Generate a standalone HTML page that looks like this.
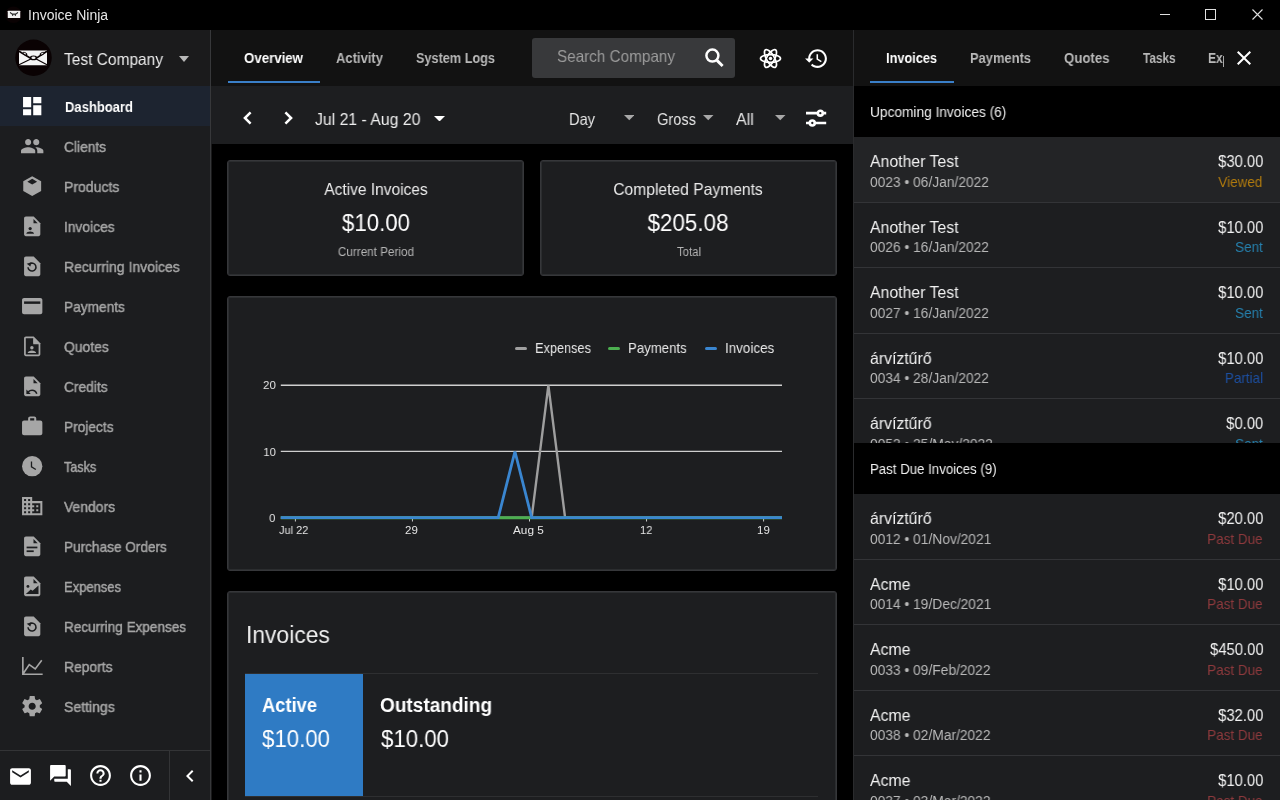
<!DOCTYPE html>
<html><head><meta charset="utf-8">
<style>
*{margin:0;padding:0;box-sizing:border-box}
html,body{width:1280px;height:800px;overflow:hidden;background:#000;font-family:"Liberation Sans",sans-serif;color:#fff}
.a{position:absolute;display:block}
.t{position:absolute;white-space:nowrap;line-height:1;will-change:transform}
.sb{-webkit-text-stroke:0.35px currentColor}
</style></head><body>
<div class="a" style="left:0px;top:0px;width:1280px;height:30px;background:#000;"></div>
<div class="a" style="left:0px;top:30px;width:210px;height:770px;background:#1c1d1f;"></div>
<div class="a" style="left:0px;top:30px;width:210px;height:56px;background:#1b1b1c;"></div>
<div class="a" style="left:210px;top:30px;width:1px;height:770px;background:#37383a;"></div>
<div class="a" style="left:211px;top:30px;width:1px;height:770px;background:rgba(55,56,58,0.45);"></div>
<div class="a" style="left:211px;top:30px;width:642px;height:56px;background:#121212;"></div>
<div class="a" style="left:211px;top:86px;width:642px;height:58px;background:#1d1e20;"></div>
<div class="a" style="left:853px;top:30px;width:1px;height:770px;background:#2a2b2d;"></div>
<div class="a" style="left:854px;top:30px;width:426px;height:56px;background:#121212;"></div>
<div class="t" style="left:28.00px;top:8.00px;font-size:14px;color:#e6e6e6;transform:scaleX(0.9981);transform-origin:left;">Invoice Ninja</div>
<svg class="a" style="left:4px;top:5px;" width="20" height="20" viewBox="0 0 20 20"><circle cx="9.5" cy="9.8" r="8.3" fill="#0a0203"/><rect x="3.75" y="5.75" width="12.5" height="7.25" rx="0.6" fill="#f0f0f0"/><path d="M6.2 7.3 Q7 9.1 8.6 9.1 H11.4 Q13 9.1 13.8 7.3" stroke="#2a2a2a" stroke-width="1.1" fill="none"/><rect x="8.1" y="9" width="1.1" height="1.9" fill="#2a2a2a"/><rect x="10.8" y="9" width="1.1" height="1.9" fill="#2a2a2a"/></svg>
<div class="a" style="left:1160px;top:14px;width:10px;height:1px;background:#e0e0e0;"></div>
<div class="a" style="left:1205px;top:9px;width:11px;height:11px;background:transparent;border:1px solid #e0e0e0"></div>
<svg class="a" style="left:1252px;top:9px;" width="11" height="11" viewBox="0 0 11 11"><path d="M0.5 0.5L10.5 10.5M10.5 0.5L0.5 10.5" stroke="#e0e0e0" stroke-width="1.1"/></svg>
<svg class="a" style="left:14px;top:39px;" width="38" height="38" viewBox="0 0 38 38"><circle cx="19.5" cy="18.75" r="18.25" fill="#0a0203"/><rect x="5" y="11.5" width="28" height="14.75" fill="#f4f4f4"/><path d="M5 12.2 L17 19.4 M33 12.2 L22 19.4" stroke="#0a0203" stroke-width="1.7" fill="none"/><path d="M5 25.8 L16.8 20 M33 25.8 L22.2 20" stroke="#0a0203" stroke-width="1.2" fill="none"/><ellipse cx="19.5" cy="18.9" rx="3.6" ry="2.3" fill="#0a0203"/><ellipse cx="19.5" cy="18.7" rx="2.1" ry="1.2" fill="#f4f4f4"/><ellipse cx="11" cy="14.8" rx="2.6" ry="1.5" transform="rotate(30 11 14.8)" fill="#0a0203"/><ellipse cx="10.8" cy="14.5" rx="1.5" ry="0.6" transform="rotate(30 10.8 14.5)" fill="#f4f4f4"/><ellipse cx="28" cy="14.8" rx="2.6" ry="1.5" transform="rotate(-30 28 14.8)" fill="#0a0203"/><ellipse cx="28.2" cy="14.5" rx="1.5" ry="0.6" transform="rotate(-30 28.2 14.5)" fill="#f4f4f4"/></svg>
<div class="t" style="left:64.00px;top:50.75px;font-size:16.5px;color:#ececec;transform:scaleX(0.9388);transform-origin:left;">Test Company</div>
<svg class="a" style="left:179px;top:56px;" width="10" height="6" viewBox="0 0 10 6"><path d="M0 0h10L5 6z" fill="#b8b8b8"/></svg>
<div class="a" style="left:0px;top:86px;width:210px;height:40px;background:#1d2430;"></div>
<div class="t" style="left:64.50px;top:100.00px;font-size:14px;color:#ffffff;font-weight:bold;transform:scaleX(0.9302);transform-origin:left;">Dashboard</div>
<div class="t" style="left:64.30px;top:139.75px;font-size:14.5px;color:#a6a6a6;transform:scaleX(0.9492);transform-origin:left;-webkit-text-stroke:0.45px #a6a6a6">Clients</div>
<div class="t" style="left:64.30px;top:179.75px;font-size:14.5px;color:#a6a6a6;transform:scaleX(0.9668);transform-origin:left;-webkit-text-stroke:0.45px #a6a6a6">Products</div>
<div class="t" style="left:64.30px;top:219.75px;font-size:14.5px;color:#a6a6a6;transform:scaleX(0.9502);transform-origin:left;-webkit-text-stroke:0.45px #a6a6a6">Invoices</div>
<div class="t" style="left:64.30px;top:259.75px;font-size:14.5px;color:#a6a6a6;transform:scaleX(0.9642);transform-origin:left;-webkit-text-stroke:0.45px #a6a6a6">Recurring Invoices</div>
<div class="t" style="left:64.30px;top:299.75px;font-size:14.5px;color:#a6a6a6;transform:scaleX(0.9434);transform-origin:left;-webkit-text-stroke:0.45px #a6a6a6">Payments</div>
<div class="t" style="left:64.30px;top:339.75px;font-size:14.5px;color:#a6a6a6;transform:scaleX(0.9583);transform-origin:left;-webkit-text-stroke:0.45px #a6a6a6">Quotes</div>
<div class="t" style="left:64.30px;top:379.75px;font-size:14.5px;color:#a6a6a6;transform:scaleX(0.9478);transform-origin:left;-webkit-text-stroke:0.45px #a6a6a6">Credits</div>
<div class="t" style="left:64.30px;top:419.75px;font-size:14.5px;color:#a6a6a6;transform:scaleX(0.9456);transform-origin:left;-webkit-text-stroke:0.45px #a6a6a6">Projects</div>
<div class="t" style="left:64.30px;top:459.75px;font-size:14.5px;color:#a6a6a6;transform:scaleX(0.8718);transform-origin:left;-webkit-text-stroke:0.45px #a6a6a6">Tasks</div>
<div class="t" style="left:64.30px;top:499.75px;font-size:14.5px;color:#a6a6a6;transform:scaleX(0.9596);transform-origin:left;-webkit-text-stroke:0.45px #a6a6a6">Vendors</div>
<div class="t" style="left:64.30px;top:539.75px;font-size:14.5px;color:#a6a6a6;transform:scaleX(0.9380);transform-origin:left;-webkit-text-stroke:0.45px #a6a6a6">Purchase Orders</div>
<div class="t" style="left:64.30px;top:579.75px;font-size:14.5px;color:#a6a6a6;transform:scaleX(0.8956);transform-origin:left;-webkit-text-stroke:0.45px #a6a6a6">Expenses</div>
<div class="t" style="left:64.30px;top:619.75px;font-size:14.5px;color:#a6a6a6;transform:scaleX(0.9349);transform-origin:left;-webkit-text-stroke:0.45px #a6a6a6">Recurring Expenses</div>
<div class="t" style="left:64.30px;top:659.75px;font-size:14.5px;color:#a6a6a6;transform:scaleX(0.9567);transform-origin:left;-webkit-text-stroke:0.45px #a6a6a6">Reports</div>
<div class="t" style="left:64.30px;top:699.75px;font-size:14.5px;color:#a6a6a6;transform:scaleX(0.9695);transform-origin:left;-webkit-text-stroke:0.45px #a6a6a6">Settings</div>
<svg class="a" style="left:19.5px;top:93.6px;" width="24.4" height="24.4" viewBox="0 0 24 24"><path fill="#fff" d="M3 13h8V3H3v10zm0 8h8v-6H3v6zm10 0h8V11h-8v10zm0-18v6h8V3h-8z"/></svg>
<svg class="a" style="left:19.5px;top:133.60000000000002px;" width="24.4" height="24.4" viewBox="0 0 24 24"><path fill="#a6a6a6" d="M16 11c1.66 0 2.99-1.34 2.99-3S17.66 5 16 5c-1.66 0-3 1.34-3 3s1.34 3 3 3zm-8 0c1.66 0 2.99-1.34 2.99-3S9.66 5 8 5C6.34 5 5 6.34 5 8s1.34 3 3 3zm0 2c-2.33 0-7 1.17-7 3.5V19h14v-2.5c0-2.33-4.67-3.5-7-3.5zm8 0c-.29 0-.62.02-.97.05 1.16.84 1.97 1.97 1.97 3.45V19h6v-2.5c0-2.33-4.67-3.5-7-3.5z"/></svg>
<svg class="a" style="left:19.5px;top:173.60000000000002px;" width="24.4" height="24.4" viewBox="0 0 24 24"><path fill="#a6a6a6" d="M12 2.3 L20.8 7.2 V16.8 L12 21.7 L3.2 16.8 V7.2 Z"/><path fill="#1c1d1f" d="M12 4.7 L16.8 7.6 L12 10.4 L7.2 7.6 Z"/></svg>
<svg class="a" style="left:19.5px;top:213.60000000000002px;" width="24.4" height="24.4" viewBox="0 0 24 24"><path fill="#a6a6a6" d="M6 2.5h7.5L20 9v11c0 1-.8 1.8-1.8 1.8H5.8C4.8 21.8 4 21 4 20V4.3C4 3.3 4.8 2.5 5.8 2.5z"/><path fill="#1c1d1f" d="M13.3 5 L17.4 9.2 H13.3 Z"/><circle cx="10" cy="14.3" r="1.6" fill="#1c1d1f"/><path fill="#1c1d1f" d="M6.2 19.5c0-1.6 2.2-2.4 3.8-2.4s3.8.8 3.8 2.4z"/></svg>
<svg class="a" style="left:19.5px;top:253.60000000000002px;" width="24.4" height="24.4" viewBox="0 0 24 24"><path fill="#a6a6a6" d="M6 2.5h7.5L20 9v11c0 1-.8 1.8-1.8 1.8H5.8C4.8 21.8 4 21 4 20V4.3C4 3.3 4.8 2.5 5.8 2.5z"/><path fill="none" stroke="#1c1d1f" stroke-width="1.5" d="M9.9 9.5 A3.9 3.9 0 1 1 7.9 13"/><path fill="#1c1d1f" d="M6.6 9.6 L11.2 8.2 L10.2 12.2 Z"/></svg>
<svg class="a" style="left:19.5px;top:293.6px;" width="24.4" height="24.4" viewBox="0 0 24 24"><path fill="#a6a6a6" d="M20 4H4c-1.11 0-2 .89-2 2v12c0 1.11.89 2 2 2h16c1.11 0 2-.89 2-2V6c0-1.11-.89-2-2-2z"/><rect x="4" y="7.3" width="16" height="2.4" fill="#1c1d1f"/></svg>
<svg class="a" style="left:19.5px;top:333.6px;" width="24.4" height="24.4" viewBox="0 0 24 24"><path fill="#a6a6a6" d="M6 2.5h7.5L20 9v11c0 1-.8 1.8-1.8 1.8H5.8C4.8 21.8 4 21 4 20V4.3C4 3.3 4.8 2.5 5.8 2.5z"/><path fill="#1c1d1f" d="M5.7 4.3h7.3V10h5.3v10.1H5.7z"/><path fill="#a6a6a6" d="M13.3 5 L17.4 9.2 H13.3 Z"/><circle cx="11.7" cy="13.6" r="1.7" fill="#a6a6a6"/><path fill="#a6a6a6" d="M7.5 18.8c0-1.7 2.5-2.6 4.2-2.6s4.2.9 4.2 2.6z"/></svg>
<svg class="a" style="left:19.5px;top:373.6px;" width="24.4" height="24.4" viewBox="0 0 24 24"><path fill="#a6a6a6" d="M6 2.5h7.5L20 9v11c0 1-.8 1.8-1.8 1.8H5.8C4.8 21.8 4 21 4 20V4.3C4 3.3 4.8 2.5 5.8 2.5z"/><path fill="#1c1d1f" d="M13.3 5 L17.4 9.2 H13.3 Z"/><path fill="none" stroke="#1c1d1f" stroke-width="1.5" d="M16.5 19.5c-.8-2.3-2.6-3.4-4.6-3.4-1.5 0-2.8.6-3.8 1.5"/><path fill="#1c1d1f" d="M6.3 15.2 V19.6 H10.6 Z"/></svg>
<svg class="a" style="left:19.5px;top:413.6px;" width="24.4" height="24.4" viewBox="0 0 24 24"><path fill="#a6a6a6" d="M20 6.5h-4V4.5c0-1.11-.89-2-2-2h-4c-1.11 0-2 .89-2 2v2H4c-1.11 0-1.99.89-1.99 2L2 19c0 1.11.89 2 2 2h16c1.11 0 2-.89 2-2V8.5c0-1.11-.89-2-2-2zm-6 0h-4V4.2h4v2.3z"/></svg>
<svg class="a" style="left:19.5px;top:453.6px;" width="24.4" height="24.4" viewBox="0 0 24 24"><circle cx="12" cy="12" r="10" fill="#a6a6a6"/><path fill="none" stroke="#1c1d1f" stroke-width="1.3" d="M11.3 7.3V12.6L15.6 15.3"/></svg>
<svg class="a" style="left:19.5px;top:493.6px;" width="24.4" height="24.4" viewBox="0 0 24 24"><path fill="#a6a6a6" d="M12 7V3H2v18h20V7H12zM6 19H4v-2h2v2zm0-4H4v-2h2v2zm0-4H4V9h2v2zm0-4H4V5h2v2zm4 12H8v-2h2v2zm0-4H8v-2h2v2zm0-4H8V9h2v2zm0-4H8V5h2v2zm10 12h-8v-2h2v-2h-2v-2h2v-2h-2V9h8v10zm-2-8h-2v2h2v-2zm0 4h-2v2h2v-2z"/></svg>
<svg class="a" style="left:19.5px;top:533.5999999999999px;" width="24.4" height="24.4" viewBox="0 0 24 24"><path fill="#a6a6a6" d="M6 2.5h7.5L20 9v11c0 1-.8 1.8-1.8 1.8H5.8C4.8 21.8 4 21 4 20V4.3C4 3.3 4.8 2.5 5.8 2.5z"/><path fill="#1c1d1f" d="M13.3 5 L17.4 9.2 H13.3 Z"/><rect x="6.5" y="12.4" width="10.6" height="1.7" fill="#1c1d1f"/><rect x="6.5" y="16.1" width="7" height="1.7" fill="#1c1d1f"/></svg>
<svg class="a" style="left:19.5px;top:573.5999999999999px;" width="24.4" height="24.4" viewBox="0 0 24 24"><path fill="#a6a6a6" d="M6 2.5h7.5L20 9v11c0 1-.8 1.8-1.8 1.8H5.8C4.8 21.8 4 21 4 20V4.3C4 3.3 4.8 2.5 5.8 2.5z"/><path fill="#1c1d1f" d="M13.3 5 L17.4 9.2 H13.3 Z"/><circle cx="7.8" cy="12.2" r="1.4" fill="#1c1d1f"/><path fill="#1c1d1f" d="M5.8 19.8 L10.6 15.2 L12.4 16.6 L18.2 11.2 V19.8 Z"/></svg>
<svg class="a" style="left:19.5px;top:613.5999999999999px;" width="24.4" height="24.4" viewBox="0 0 24 24"><path fill="#a6a6a6" d="M6 2.5h7.5L20 9v11c0 1-.8 1.8-1.8 1.8H5.8C4.8 21.8 4 21 4 20V4.3C4 3.3 4.8 2.5 5.8 2.5z"/><path fill="none" stroke="#1c1d1f" stroke-width="1.5" d="M9.9 9.5 A3.9 3.9 0 1 1 7.9 13"/><path fill="#1c1d1f" d="M6.6 9.6 L11.2 8.2 L10.2 12.2 Z"/></svg>
<svg class="a" style="left:19.5px;top:653.5999999999999px;" width="24.4" height="24.4" viewBox="0 0 24 24"><path fill="none" stroke="#a6a6a6" stroke-width="1.6" d="M2.8 3v16.9h19.5M3.4 19l5.7-8.5 5.9 4.2 6.4-8.5"/></svg>
<svg class="a" style="left:19.5px;top:693.5999999999999px;" width="24.4" height="24.4" viewBox="0 0 24 24"><path fill="#a6a6a6" d="M19.43 12.98c.04-.32.07-.64.07-.98s-.03-.66-.07-.98l2.11-1.65c.19-.15.24-.42.12-.64l-2-3.46c-.12-.22-.39-.3-.61-.22l-2.49 1c-.52-.4-1.08-.73-1.69-.98l-.38-2.65C14.46 2.18 14.25 2 14 2h-4c-.25 0-.46.18-.49.42l-.38 2.65c-.61.25-1.17.59-1.69.98l-2.49-1c-.23-.09-.49 0-.61.22l-2 3.46c-.13.22-.07.49.12.64l2.11 1.65c-.04.32-.07.65-.07.98s.03.66.07.98l-2.11 1.65c-.19.15-.24.42-.12.64l2 3.46c.12.22.39.3.61.22l2.49-1c.52.4 1.08.73 1.69.98l.38 2.65c.03.24.24.42.49.42h4c.25 0 .46-.18.49-.42l.38-2.65c.61-.25 1.17-.59 1.69-.98l2.49 1c.23.09.49 0 .61-.22l2-3.46c.12-.22.07-.49-.12-.64l-2.11-1.65zM12 15.5c-1.93 0-3.5-1.57-3.5-3.5s1.57-3.5 3.5-3.5 3.5 1.57 3.5 3.5-1.57 3.5-3.5 3.5z"/></svg>
<div class="a" style="left:0px;top:750px;width:210px;height:1px;background:#333436;"></div>
<div class="a" style="left:169px;top:751px;width:1px;height:49px;background:#333436;"></div>
<svg class="a" style="left:7.75px;top:763.5px;" width="25" height="25" viewBox="0 0 24 24"><path fill="#fff" d="M20 4H4c-1.1 0-1.99.9-1.99 2L2 18c0 1.1.9 2 2 2h16c1.1 0 2-.9 2-2V6c0-1.1-.9-2-2-2zm0 4l-8 5-8-5V6l8 5 8-5v2z"/></svg>
<svg class="a" style="left:47.75px;top:763.1px;" width="25" height="25" viewBox="0 0 24 24"><path fill="#fff" d="M21 6h-2v9H6v2c0 .55.45 1 1 1h11l4 4V7c0-.55-.45-1-1-1zm-4 6V3c0-.55-.45-1-1-1H3c-.55 0-1 .45-1 1v14l4-4h10c.55 0 1-.45 1-1z"/></svg>
<svg class="a" style="left:87.5px;top:763.0px;" width="25" height="25" viewBox="0 0 24 24"><path fill="#fff" d="M11 18h2v-2h-2v2zm1-16C6.48 2 2 6.48 2 12s4.48 10 10 10 10-4.48 10-10S17.52 2 12 2zm0 18c-4.41 0-8-3.59-8-8s3.59-8 8-8 8 3.59 8 8-3.59 8-8 8zm0-14c-2.21 0-4 1.79-4 4h2c0-1.1.9-2 2-2s2 .9 2 2c0 2-3 1.75-3 5h2c0-2.25 3-2.5 3-5 0-2.21-1.79-4-4-4z"/></svg>
<svg class="a" style="left:127.6px;top:763.0px;" width="25" height="25" viewBox="0 0 24 24"><path fill="#fff" d="M11 7h2v2h-2zm0 4h2v6h-2zm1-9C6.48 2 2 6.48 2 12s4.48 10 10 10 10-4.48 10-10S17.52 2 12 2zm0 18c-4.41 0-8-3.59-8-8s3.59-8 8-8 8 3.59 8 8-3.59 8-8 8z"/></svg>
<svg class="a" style="left:178.0px;top:763.7px;" width="24" height="24" viewBox="0 0 24 24"><path fill="#fff" d="M15.41 7.41L14 6l-6 6 6 6 1.41-1.41L10.83 12z"/></svg>
<div class="t" style="left:244.20px;top:51.00px;font-size:14px;color:#ffffff;font-weight:bold;transform:scaleX(0.9470);transform-origin:left;">Overview</div>
<div class="t" style="left:336.00px;top:51.00px;font-size:14px;color:#b9b9b9;font-weight:bold;transform:scaleX(0.9298);transform-origin:left;">Activity</div>
<div class="t" style="left:416.00px;top:51.00px;font-size:14px;color:#b9b9b9;font-weight:bold;transform:scaleX(0.9065);transform-origin:left;">System Logs</div>
<div class="a" style="left:228px;top:80.6px;width:92px;height:2.2px;background:#3a7fc8;"></div>
<div class="a" style="left:532px;top:38px;width:203px;height:40px;background:#38393b;border-radius:3px"></div>
<div class="t" style="left:557.00px;top:47.75px;font-size:16.5px;color:#9c9c9c;transform:scaleX(0.9255);transform-origin:left;">Search Company</div>
<svg class="a" style="left:700px;top:42px;" width="30" height="30" viewBox="0 0 30 30"><g fill="none" stroke="#fff"><circle cx="12.4" cy="13.6" r="6" stroke-width="2.5"/><path d="M17 18.4L22.6 24" stroke-width="2.9"/></g></svg>
<svg class="a" style="left:759px;top:48px;" width="23" height="21" viewBox="0 0 23 21"><g transform="translate(11.5,10.5)" fill="none" stroke="#fff" stroke-width="1.7"><ellipse rx="10" ry="3.9"/><ellipse rx="10" ry="3.9" transform="rotate(60)"/><ellipse rx="10" ry="3.9" transform="rotate(120)"/><circle r="2.6" fill="#121212" stroke="none"/><circle r="1.75" fill="#fff" stroke="none"/></g></svg>
<svg class="a" style="left:803.5px;top:45.5px;" width="25" height="25" viewBox="0 0 24 24"><path fill="#fff" d="M13 3c-4.97 0-9 4.03-9 9H1l3.89 3.89.07.14L9 12H6c0-3.87 3.13-7 7-7s7 3.13 7 7-3.13 7-7 7c-1.93 0-3.68-.79-4.94-2.06l-1.42 1.42C8.27 19.99 10.51 21 13 21c4.97 0 9-4.03 9-9s-4.03-9-9-9zm-1 5v5l4.28 2.54.72-1.21-3.5-2.08V8H12z"/></svg>
<svg class="a" style="left:238px;top:108px;" width="20" height="20" viewBox="0 0 20 20"><path d="M12.6 4.3L6.9 10L12.6 15.7" fill="none" stroke="#fff" stroke-width="2.5"/></svg>
<svg class="a" style="left:278px;top:108px;" width="20" height="20" viewBox="0 0 20 20"><path d="M7.4 4.3L13.1 10L7.4 15.7" fill="none" stroke="#fff" stroke-width="2.5"/></svg>
<div class="t" style="left:315.40px;top:110.75px;font-size:16.5px;color:#eeeeee;transform:scaleX(0.9573);transform-origin:left;">Jul 21 - Aug 20</div>
<svg class="a" style="left:434px;top:115.7px;" width="11" height="5.5" viewBox="0 0 11 5.5"><path d="M0 0h11L5.5 5.5z" fill="#fff"/></svg>
<div class="t" style="left:569.00px;top:110.75px;font-size:16.5px;color:#e6e6e6;transform:scaleX(0.8859);transform-origin:left;">Day</div>
<svg class="a" style="left:623.5px;top:115.4px;" width="10.5" height="5.3" viewBox="0 0 10.5 5.3"><path d="M0 0h10.5L5.25 5.3z" fill="#a8a8a8"/></svg>
<div class="t" style="left:656.50px;top:110.75px;font-size:16.5px;color:#e6e6e6;transform:scaleX(0.8864);transform-origin:left;">Gross</div>
<svg class="a" style="left:703.3px;top:115.4px;" width="10.5" height="5.3" viewBox="0 0 10.5 5.3"><path d="M0 0h10.5L5.25 5.3z" fill="#a8a8a8"/></svg>
<div class="t" style="left:736.20px;top:110.75px;font-size:16.5px;color:#e6e6e6;transform:scaleX(0.9646);transform-origin:left;">All</div>
<svg class="a" style="left:775.4px;top:115.4px;" width="10.5" height="5.3" viewBox="0 0 10.5 5.3"><path d="M0 0h10.5L5.25 5.3z" fill="#a8a8a8"/></svg>
<svg class="a" style="left:804px;top:108px;" width="24" height="20" viewBox="0 0 24 20"><g fill="none" stroke="#fff" stroke-width="2.6"><path d="M2 5.15H13.4M19.4 5.15H22.2M2 15H5.4M11.4 15H22.2"/><circle cx="16.3" cy="5.15" r="2.45"/><circle cx="8.3" cy="15" r="2.45"/></g></svg>
<div class="a" style="left:227px;top:160px;width:297px;height:116px;background:#1d1e20;border:1px solid #36373a;box-shadow:inset 0 0 0 1px rgba(54,55,58,0.6);border-radius:3px"></div>
<div class="a" style="left:540px;top:160px;width:296.5px;height:116px;background:#1d1e20;border:1px solid #36373a;box-shadow:inset 0 0 0 1px rgba(54,55,58,0.6);border-radius:3px"></div>
<div class="t" style="left:175.50px;width:400px;text-align:center;top:180.75px;font-size:16.5px;color:#ececec;transform:scaleX(0.9405);transform-origin:center;">Active Invoices</div>
<div class="t" style="left:176.00px;width:400px;text-align:center;top:211.25px;font-size:24.5px;color:#ffffff;transform:scaleX(0.9073);transform-origin:center;">$10.00</div>
<div class="t" style="left:175.60px;width:400px;text-align:center;top:245.75px;font-size:12.5px;color:#b4b4b4;transform:scaleX(0.9348);transform-origin:center;">Current Period</div>
<div class="t" style="left:488.25px;width:400px;text-align:center;top:180.75px;font-size:16.5px;color:#ececec;transform:scaleX(0.9490);transform-origin:center;">Completed Payments</div>
<div class="t" style="left:488.25px;width:400px;text-align:center;top:211.25px;font-size:24.5px;color:#ffffff;transform:scaleX(0.9147);transform-origin:center;">$205.08</div>
<div class="t" style="left:488.60px;width:400px;text-align:center;top:245.75px;font-size:12.5px;color:#b4b4b4;transform:scaleX(0.9091);transform-origin:center;">Total</div>
<div class="a" style="left:227px;top:296.3px;width:609.5px;height:274.7px;background:#1d1e20;border:1px solid #36373a;box-shadow:inset 0 0 0 1px rgba(54,55,58,0.6);border-radius:3px"></div>
<div class="a" style="left:515px;top:346.6px;width:12px;height:3px;background:#a0a0a0;border-radius:1.5px"></div>
<div class="t" style="left:535.20px;top:340.75px;font-size:14.5px;color:#e8e8e8;transform:scaleX(0.8791);transform-origin:left;">Expenses</div>
<div class="a" style="left:608px;top:346.6px;width:12px;height:3px;background:#4caf50;border-radius:1.5px"></div>
<div class="t" style="left:628.40px;top:340.75px;font-size:14.5px;color:#e8e8e8;transform:scaleX(0.9092);transform-origin:left;">Payments</div>
<div class="a" style="left:704.5px;top:346.6px;width:12px;height:3px;background:#3a86d0;border-radius:1.5px"></div>
<div class="t" style="left:724.50px;top:340.75px;font-size:14.5px;color:#e8e8e8;transform:scaleX(0.9248);transform-origin:left;">Invoices</div>
<svg class="a" style="left:0;top:0" width="1280" height="800" viewBox="0 0 1280 800"><line x1="280.8" y1="385.3" x2="782" y2="385.3" stroke="#cfcfcf" stroke-width="1.4"/><line x1="280.8" y1="451.4" x2="782" y2="451.4" stroke="#cfcfcf" stroke-width="1.4"/><line x1="295.40" y1="518" x2="295.40" y2="521.5" stroke="#cfcfcf" stroke-width="1"/><line x1="412.45" y1="518" x2="412.45" y2="521.5" stroke="#cfcfcf" stroke-width="1"/><line x1="529.50" y1="518" x2="529.50" y2="521.5" stroke="#cfcfcf" stroke-width="1"/><line x1="646.55" y1="518" x2="646.55" y2="521.5" stroke="#cfcfcf" stroke-width="1"/><line x1="763.60" y1="518" x2="763.60" y2="521.5" stroke="#cfcfcf" stroke-width="1"/><polyline fill="none" stroke="#9e9e9e" stroke-width="2.4" stroke-linejoin="miter" points="280.8,517.7 531.65,517.7 548.37,385.30 565.09,517.7 782,517.7"/><polyline fill="none" stroke="#4caf50" stroke-width="3" points="280.8,517.7 782,517.7"/><polyline fill="none" stroke="#3a86d0" stroke-width="2.8" points="280.8,517.7 498.22,517.7 514.94,451.50 531.65,517.7 782,517.7"/></svg>
<div class="t" style="right:1004.40px;top:380.25px;font-size:11.5px;color:#e6e6e6;transform:scaleX(0.9922);transform-origin:right;">20</div>
<div class="t" style="right:1004.40px;top:447.25px;font-size:11.5px;color:#e6e6e6;transform:scaleX(0.9700);transform-origin:right;">10</div>
<div class="t" style="right:1004.40px;top:513.25px;font-size:11.5px;color:#e6e6e6;transform:scaleX(0.9700);transform-origin:right;">0</div>
<div class="t" style="left:279.10px;top:525.25px;font-size:11.5px;color:#e6e6e6;transform:scaleX(0.9544);transform-origin:left;">Jul 22</div>
<div class="t" style="left:405.00px;top:525.25px;font-size:11.5px;color:#e6e6e6;transform:scaleX(0.9700);transform-origin:left;">29</div>
<div class="t" style="left:513.00px;top:525.25px;font-size:11.5px;color:#e6e6e6;transform:scaleX(1.0233);transform-origin:left;">Aug 5</div>
<div class="t" style="left:639.70px;top:525.25px;font-size:11.5px;color:#e6e6e6;transform:scaleX(0.9609);transform-origin:left;">12</div>
<div class="t" style="left:757.00px;top:525.25px;font-size:11.5px;color:#e6e6e6;transform:scaleX(0.9700);transform-origin:left;">19</div>
<div class="a" style="left:227px;top:591.3px;width:609.5px;height:240px;background:#1d1e20;border:1px solid #36373a;box-shadow:inset 0 0 0 1px rgba(54,55,58,0.6);border-radius:3px"></div>
<div class="t" style="left:245.50px;top:624.25px;font-size:23.5px;color:#f0f0f0;transform:scaleX(0.9716);transform-origin:left;">Invoices</div>
<div class="a" style="left:245px;top:673px;width:573px;height:1px;background:#2e2f31;"></div>
<div class="a" style="left:245px;top:674px;width:118px;height:122px;background:#2f7bc4;"></div>
<div class="a" style="left:245px;top:796px;width:573px;height:1px;background:#2e2f31;"></div>
<div class="t" style="left:261.75px;top:696.25px;font-size:19.5px;color:#ffffff;font-weight:bold;transform:scaleX(0.9394);transform-origin:left;">Active</div>
<div class="t" style="left:262.25px;top:727.25px;font-size:24.5px;color:#ffffff;transform:scaleX(0.9073);transform-origin:left;">$10.00</div>
<div class="t" style="left:379.75px;top:696.25px;font-size:19.5px;color:#ffffff;font-weight:bold;transform:scaleX(0.9756);transform-origin:left;">Outstanding</div>
<div class="t" style="left:380.50px;top:727.25px;font-size:24.5px;color:#ffffff;transform:scaleX(0.9073);transform-origin:left;">$10.00</div>
<div class="t" style="left:886.40px;top:51.00px;font-size:14px;color:#ffffff;font-weight:bold;transform:scaleX(0.9099);transform-origin:left;">Invoices</div>
<div class="t" style="left:970.40px;top:51.00px;font-size:14px;color:#b9b9b9;font-weight:bold;transform:scaleX(0.9221);transform-origin:left;">Payments</div>
<div class="t" style="left:1064.10px;top:51.00px;font-size:14px;color:#b9b9b9;font-weight:bold;transform:scaleX(0.9430);transform-origin:left;">Quotes</div>
<div class="t" style="left:1142.70px;top:51.00px;font-size:14px;color:#b9b9b9;font-weight:bold;transform:scaleX(0.8461);transform-origin:left;">Tasks</div>
<div class="a" style="left:1208px;top:45px;width:15px;height:25px;overflow:hidden"><div class="t" style="left:0;top:6.1px;font-size:14px;font-weight:bold;color:#b9b9b9;transform:scaleX(0.86);transform-origin:left">Ex</div></div>
<div class="a" style="left:1222.6px;top:55.5px;width:1.2px;height:11px;background:#a8a8a8;"></div>
<div class="a" style="left:870px;top:80.6px;width:84px;height:2.2px;background:#3a7fc8;"></div>
<svg class="a" style="left:1232.0px;top:46.0px;" width="24" height="24" viewBox="0 0 24 24"><path fill="#fff" d="M19 6.41L17.59 5 12 10.59 6.41 5 5 6.41 10.59 12 5 17.59 6.41 19 12 13.41 17.59 19 19 17.59 13.41 12z"/></svg>
<div class="a" style="left:854px;top:86px;width:426px;height:51px;background:#000;"></div>
<div class="t" style="left:870.10px;top:105.00px;font-size:14px;color:#f0f0f0;transform:scaleX(0.9792);transform-origin:left;">Upcoming Invoices (6)</div>
<div class="a" style="left:854px;top:137.0px;width:426px;height:64.5px;background:#232426;"></div>
<div class="a" style="left:854px;top:201.5px;width:426px;height:1.2px;background:#333437;"></div>
<div class="t" style="left:870.40px;top:152.75px;font-size:16.5px;color:#f2f2f2;transform:scaleX(0.9594);transform-origin:left;">Another Test</div>
<div class="t" style="left:870.40px;top:175.00px;font-size:14px;color:#b8b8b8;transform:scaleX(0.9843);transform-origin:left;">0023 • 06/Jan/2022</div>
<div class="t" style="right:16.80px;top:152.75px;font-size:16.5px;color:#f2f2f2;transform:scaleX(0.8979);transform-origin:right;">$30.00</div>
<div class="t" style="right:17.40px;top:174.75px;font-size:14.5px;color:#b27c0e;transform:scaleX(0.9302);transform-origin:right;">Viewed</div>
<div class="a" style="left:854px;top:202.5px;width:426px;height:64.5px;background:#1d1e20;"></div>
<div class="a" style="left:854px;top:267.0px;width:426px;height:1.2px;background:#333437;"></div>
<div class="t" style="left:870.40px;top:218.75px;font-size:16.5px;color:#f2f2f2;transform:scaleX(0.9594);transform-origin:left;">Another Test</div>
<div class="t" style="left:870.40px;top:240.00px;font-size:14px;color:#b8b8b8;transform:scaleX(0.9843);transform-origin:left;">0026 • 16/Jan/2022</div>
<div class="t" style="right:16.80px;top:218.75px;font-size:16.5px;color:#f2f2f2;transform:scaleX(0.8979);transform-origin:right;">$10.00</div>
<div class="t" style="right:17.40px;top:239.75px;font-size:14.5px;color:#2680ad;transform:scaleX(0.9302);transform-origin:right;">Sent</div>
<div class="a" style="left:854px;top:268.0px;width:426px;height:64.5px;background:#1d1e20;"></div>
<div class="a" style="left:854px;top:332.5px;width:426px;height:1.2px;background:#333437;"></div>
<div class="t" style="left:870.40px;top:283.75px;font-size:16.5px;color:#f2f2f2;transform:scaleX(0.9594);transform-origin:left;">Another Test</div>
<div class="t" style="left:870.40px;top:306.00px;font-size:14px;color:#b8b8b8;transform:scaleX(0.9843);transform-origin:left;">0027 • 16/Jan/2022</div>
<div class="t" style="right:16.80px;top:283.75px;font-size:16.5px;color:#f2f2f2;transform:scaleX(0.8979);transform-origin:right;">$10.00</div>
<div class="t" style="right:17.40px;top:305.75px;font-size:14.5px;color:#2680ad;transform:scaleX(0.9302);transform-origin:right;">Sent</div>
<div class="a" style="left:854px;top:333.5px;width:426px;height:64.5px;background:#1d1e20;"></div>
<div class="a" style="left:854px;top:398.0px;width:426px;height:1.2px;background:#333437;"></div>
<div class="t" style="left:870.40px;top:349.75px;font-size:16.5px;color:#f2f2f2;transform:scaleX(0.9594);transform-origin:left;">árvíztűrő</div>
<div class="t" style="left:870.40px;top:371.00px;font-size:14px;color:#b8b8b8;transform:scaleX(0.9843);transform-origin:left;">0034 • 28/Jan/2022</div>
<div class="t" style="right:16.80px;top:349.75px;font-size:16.5px;color:#f2f2f2;transform:scaleX(0.8979);transform-origin:right;">$10.00</div>
<div class="t" style="right:17.40px;top:370.75px;font-size:14.5px;color:#1d4fa0;transform:scaleX(0.9302);transform-origin:right;">Partial</div>
<div class="a" style="left:854px;top:399.0px;width:426px;height:64.5px;background:#1d1e20;"></div>
<div class="a" style="left:854px;top:463.5px;width:426px;height:1.2px;background:#333437;"></div>
<div class="t" style="left:870.40px;top:414.75px;font-size:16.5px;color:#f2f2f2;transform:scaleX(0.9594);transform-origin:left;">árvíztűrő</div>
<div class="t" style="left:870.40px;top:437.00px;font-size:14px;color:#b8b8b8;transform:scaleX(0.9843);transform-origin:left;">0052 • 25/May/2022</div>
<div class="t" style="right:16.80px;top:414.75px;font-size:16.5px;color:#f2f2f2;transform:scaleX(0.8979);transform-origin:right;">$0.00</div>
<div class="t" style="right:17.40px;top:436.75px;font-size:14.5px;color:#2680ad;transform:scaleX(0.9302);transform-origin:right;">Sent</div>
<div class="a" style="left:854px;top:443px;width:426px;height:50.5px;background:#000;"></div>
<div class="t" style="left:870.10px;top:462.00px;font-size:14px;color:#f0f0f0;transform:scaleX(0.9458);transform-origin:left;">Past Due Invoices (9)</div>
<div class="a" style="left:854px;top:494.0px;width:426px;height:64.5px;background:#1d1e20;"></div>
<div class="a" style="left:854px;top:558.5px;width:426px;height:1.2px;background:#333437;"></div>
<div class="t" style="left:870.40px;top:509.75px;font-size:16.5px;color:#f2f2f2;transform:scaleX(0.9594);transform-origin:left;">árvíztűrő</div>
<div class="t" style="left:870.40px;top:532.00px;font-size:14px;color:#b8b8b8;transform:scaleX(0.9843);transform-origin:left;">0012 • 01/Nov/2021</div>
<div class="t" style="right:16.80px;top:509.75px;font-size:16.5px;color:#f2f2f2;transform:scaleX(0.8979);transform-origin:right;">$20.00</div>
<div class="t" style="right:17.40px;top:531.75px;font-size:14.5px;color:#8e3a3d;transform:scaleX(0.9302);transform-origin:right;">Past Due</div>
<div class="a" style="left:854px;top:559.5px;width:426px;height:64.5px;background:#1d1e20;"></div>
<div class="a" style="left:854px;top:624.0px;width:426px;height:1.2px;background:#333437;"></div>
<div class="t" style="left:870.40px;top:575.75px;font-size:16.5px;color:#f2f2f2;transform:scaleX(0.9594);transform-origin:left;">Acme</div>
<div class="t" style="left:870.40px;top:597.00px;font-size:14px;color:#b8b8b8;transform:scaleX(0.9843);transform-origin:left;">0014 • 19/Dec/2021</div>
<div class="t" style="right:16.80px;top:575.75px;font-size:16.5px;color:#f2f2f2;transform:scaleX(0.8979);transform-origin:right;">$10.00</div>
<div class="t" style="right:17.40px;top:596.75px;font-size:14.5px;color:#8e3a3d;transform:scaleX(0.9302);transform-origin:right;">Past Due</div>
<div class="a" style="left:854px;top:625.0px;width:426px;height:64.5px;background:#1d1e20;"></div>
<div class="a" style="left:854px;top:689.5px;width:426px;height:1.2px;background:#333437;"></div>
<div class="t" style="left:870.40px;top:640.75px;font-size:16.5px;color:#f2f2f2;transform:scaleX(0.9594);transform-origin:left;">Acme</div>
<div class="t" style="left:870.40px;top:663.00px;font-size:14px;color:#b8b8b8;transform:scaleX(0.9843);transform-origin:left;">0033 • 09/Feb/2022</div>
<div class="t" style="right:16.80px;top:640.75px;font-size:16.5px;color:#f2f2f2;transform:scaleX(0.8979);transform-origin:right;">$450.00</div>
<div class="t" style="right:17.40px;top:662.75px;font-size:14.5px;color:#8e3a3d;transform:scaleX(0.9302);transform-origin:right;">Past Due</div>
<div class="a" style="left:854px;top:690.5px;width:426px;height:64.5px;background:#1d1e20;"></div>
<div class="a" style="left:854px;top:755.0px;width:426px;height:1.2px;background:#333437;"></div>
<div class="t" style="left:870.40px;top:706.75px;font-size:16.5px;color:#f2f2f2;transform:scaleX(0.9594);transform-origin:left;">Acme</div>
<div class="t" style="left:870.40px;top:728.00px;font-size:14px;color:#b8b8b8;transform:scaleX(0.9843);transform-origin:left;">0038 • 02/Mar/2022</div>
<div class="t" style="right:16.80px;top:706.75px;font-size:16.5px;color:#f2f2f2;transform:scaleX(0.8979);transform-origin:right;">$32.00</div>
<div class="t" style="right:17.40px;top:727.75px;font-size:14.5px;color:#8e3a3d;transform:scaleX(0.9302);transform-origin:right;">Past Due</div>
<div class="a" style="left:854px;top:756.0px;width:426px;height:64.5px;background:#1d1e20;"></div>
<div class="a" style="left:854px;top:820.5px;width:426px;height:1.2px;background:#333437;"></div>
<div class="t" style="left:870.40px;top:771.75px;font-size:16.5px;color:#f2f2f2;transform:scaleX(0.9594);transform-origin:left;">Acme</div>
<div class="t" style="left:870.40px;top:794.00px;font-size:14px;color:#b8b8b8;transform:scaleX(0.9843);transform-origin:left;">0037 • 03/Mar/2022</div>
<div class="t" style="right:16.80px;top:771.75px;font-size:16.5px;color:#f2f2f2;transform:scaleX(0.8979);transform-origin:right;">$10.00</div>
<div class="t" style="right:17.40px;top:793.75px;font-size:14.5px;color:#8e3a3d;transform:scaleX(0.9302);transform-origin:right;">Past Due</div>
</body></html>
